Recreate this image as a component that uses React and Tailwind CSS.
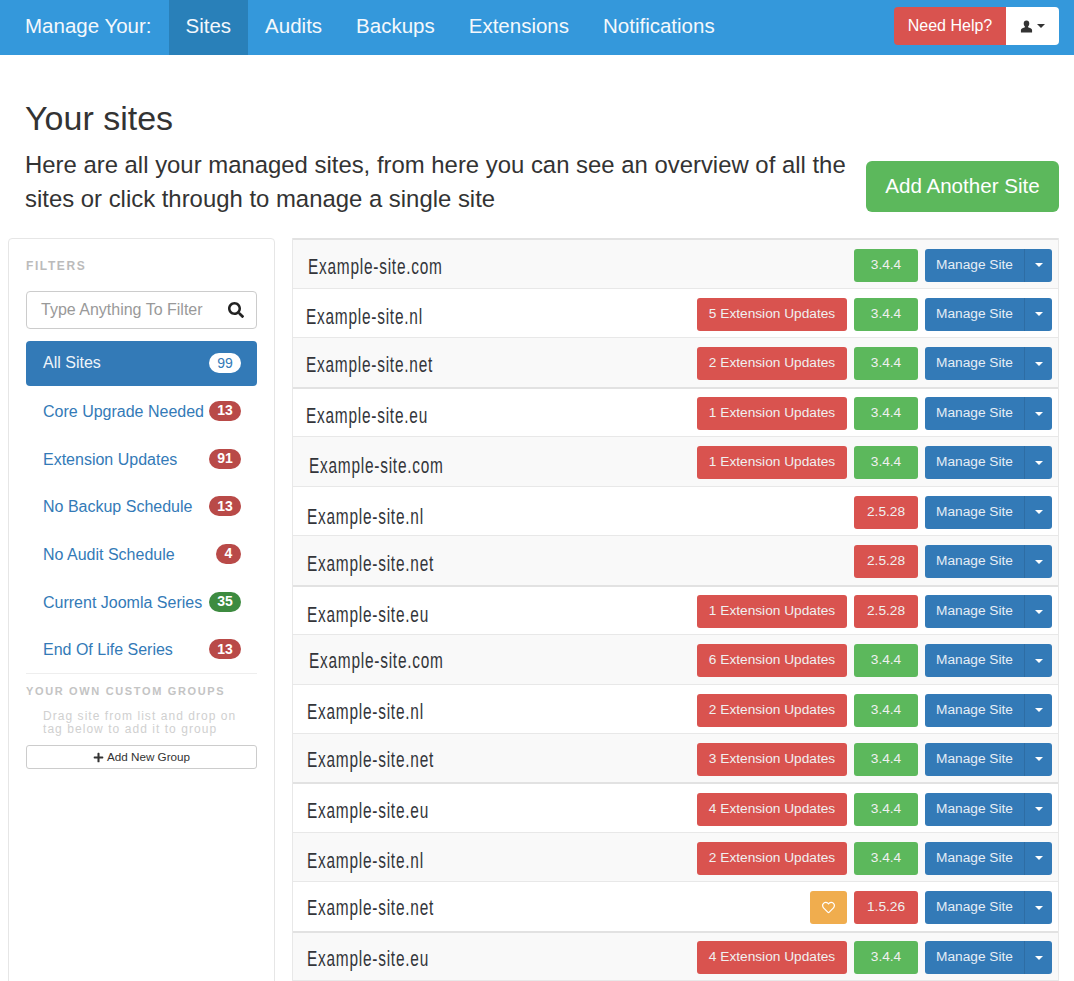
import React from 'react'
import { FaSearch, FaPlus, FaRegHeart } from 'react-icons/fa'

const navLinks = ['Sites', 'Audits', 'Backups', 'Extensions', 'Notifications']

const filters = [
  { label: 'Core Upgrade Needed', count: 13, color: 'bg-[#b94a48]' },
  { label: 'Extension Updates', count: 91, color: 'bg-[#b94a48]' },
  { label: 'No Backup Schedule', count: 13, color: 'bg-[#b94a48]' },
  { label: 'No Audit Schedule', count: 4, color: 'bg-[#b94a48]', small: true },
  { label: 'Current Joomla Series', count: 35, color: 'bg-[#3d8b40]' },
  { label: 'End Of Life Series', count: 13, color: 'bg-[#b94a48]' },
]

// h = row height, pad = name indent, nudge = name drop, thick = heavier top line
const sites = [
  { name: 'Example-site.com', ver: '3.4.4', h: 'h-[50px]', pad: 'pl-[15px]', nudge: 'mt-[6px]', thick: true },
  { name: 'Example-site.nl', ext: 5, ver: '3.4.4', h: 'h-[49px]', pad: 'pl-[13px]', nudge: 'mt-[8px]' },
  { name: 'Example-site.net', ext: 2, ver: '3.4.4', h: 'h-[50px]', pad: 'pl-[13px]', nudge: 'mt-[5px]' },
  { name: 'Example-site.eu', ext: 1, ver: '3.4.4', h: 'h-[49px]', pad: 'pl-[13px]', nudge: 'mt-[6px]', thick: true },
  { name: 'Example-site.com', ext: 1, ver: '3.4.4', h: 'h-[50px]', pad: 'pl-[16px]', nudge: 'mt-[8px]' },
  { name: 'Example-site.nl', ver: '2.5.28', old: true, h: 'h-[49px]', pad: 'pl-[14px]', nudge: 'mt-[12px]' },
  { name: 'Example-site.net', ver: '2.5.28', old: true, h: 'h-[50px]', pad: 'pl-[14px]', nudge: 'mt-[6px]' },
  { name: 'Example-site.eu', ext: 1, ver: '2.5.28', old: true, h: 'h-[49px]', pad: 'pl-[14px]', nudge: 'mt-[8px]', thick: true },
  { name: 'Example-site.com', ext: 6, ver: '3.4.4', h: 'h-[50px]', pad: 'pl-[16px]', nudge: 'mt-[3px]' },
  { name: 'Example-site.nl', ext: 2, ver: '3.4.4', h: 'h-[49px]', pad: 'pl-[14px]', nudge: 'mt-[6px]' },
  { name: 'Example-site.net', ext: 3, ver: '3.4.4', h: 'h-[49px]', pad: 'pl-[14px]', nudge: 'mt-[3px]' },
  { name: 'Example-site.eu', ext: 4, ver: '3.4.4', h: 'h-[50px]', pad: 'pl-[14px]', nudge: 'mt-[5px]', thick: true },
  { name: 'Example-site.nl', ext: 2, ver: '3.4.4', h: 'h-[49px]', pad: 'pl-[14px]', nudge: 'mt-[8px]' },
  { name: 'Example-site.net', heart: true, ver: '1.5.26', old: true, h: 'h-[50px]', pad: 'pl-[14px]', nudge: 'mt-[3px]' },
  { name: 'Example-site.eu', ext: 4, ver: '3.4.4', h: 'h-[49px]', pad: 'pl-[14px]', nudge: 'mt-[4px]', thick: true },
]

const Caret = ({ className }) => (
  <span className={`inline-block w-0 h-0 border-x-[4px] border-x-transparent border-t-[4px] ${className}`} />
)

const UserIcon = () => (
  <svg viewBox="0 0 14 14" className="w-[13px] h-[13px]" fill="currentColor">
    <path d="M7 .5c-2 0-3 1.4-3 3.2 0 1.3.6 2.6 1.3 3.2v1c-1.5.7-4.3 1.4-4.3 3v2.6h12v-2.6c0-1.6-2.8-2.3-4.3-3v-1c.7-.6 1.3-1.9 1.3-3.2C10 1.900 9 .5 7 .5z" />
  </svg>
)

const SiteRow = ({ site, index }) => (
  <div className={`flex items-center pr-[6px] border-t ${site.thick ? 'border-t-2 border-t-[#e2e2e2]' : 'border-t-[#e8e8e8]'} ${site.h} ${site.pad} ${index % 2 === 0 ? 'bg-[#f9f9f9]' : 'bg-white'}`}>
    {/* no condensed font here, so squeeze the name to the reference's width */}
    <span className={`origin-left scale-x-[.7] whitespace-nowrap text-[22px] leading-[26px] tracking-[1.1px] text-[#33353a] ${site.nudge}`}>{site.name}</span>
    <div className="ml-auto mt-[2px] flex gap-[7px] text-[13.7px] text-[#f0f0f0]">
      {site.ext && (
        <span className="flex items-center justify-center w-[150px] h-[33px] rounded-[3px] bg-[#d9534f]">{site.ext} Extension Updates</span>
      )}
      {site.heart && (
        <span className="flex items-center justify-center w-[37px] h-[33px] rounded-[3px] bg-[#f0ad4e]">
          <FaRegHeart className="w-[13px] h-[13px] text-white" />
        </span>
      )}
      <span className={`flex items-center justify-center w-[64px] h-[33px] rounded-[3px] ${site.old ? 'bg-[#d9534f]' : 'bg-[#5cb85c]'}`}>{site.ver}</span>
      <div className="flex h-[33px] w-[127px] rounded-[3px] bg-[#337ab7] text-[#e6eef6]">
        <span className="flex items-center justify-center w-[99px]">Manage Site</span>
        <span className="flex items-center justify-center w-[28px] border-l border-[#2e6da4]">
          <Caret className="border-t-white" />
        </span>
      </div>
    </div>
  </div>
)

const App = () => {
  return (
    <div className="h-[981px] overflow-hidden bg-white font-['Liberation_Sans',Arial,sans-serif] text-[#333]">
      <nav className="flex items-center h-[55px] pl-[25px] pr-[15px] bg-[#3498db] text-[20.5px] text-[#f4f8fc]">
        <span className="mr-[17px] pb-[3px]">Manage Your:</span>
        <div className="flex">
          {navLinks.map((link, i) => (
            <a key={link} className={`flex items-center h-[55px] px-[17px] pb-[3px] ${i === 0 ? 'bg-[#2980b9]' : ''}`}>{link}</a>
          ))}
        </div>
        <div className="ml-auto mb-[3px] flex h-[38px] text-[16px]">
          <span className="flex items-center justify-center w-[112px] rounded-l-[4px] bg-[#d9534f] text-white">Need Help?</span>
          <span className="flex items-center justify-center gap-[4px] w-[53px] rounded-r-[4px] bg-white text-[#333]">
            <UserIcon />
            <Caret className="border-t-[#333]" />
          </span>
        </div>
      </nav>

      <header className="flex pl-[25px] pr-[15px] pt-[43px] h-[183px]">
        <div className="w-[830px]">
          <h1 className="text-[34px] leading-[40px] mb-[10px]">Your sites</h1>
          <p className="text-[23.9px] leading-[34px]">Here are all your managed sites, from here you can see an overview of all the sites or click through to manage a single site</p>
        </div>
        <a className="ml-auto mt-[63px] flex items-center justify-center w-[193px] h-[51px] rounded-[6px] bg-[#5cb85c] text-[20.6px] text-white">Add Another Site</a>
      </header>

      <main className="flex items-start pl-[8px] pr-[15px]">
        <aside className="w-[267px] h-[760px] shrink-0 px-[17px] rounded-[4px] border border-[#e6e6e6]">
          <div className="pt-[20px] text-[12px] leading-[14px] font-bold tracking-[1.6px] text-[#bbb]">FILTERS</div>
          <div className="flex items-center justify-between h-[38px] mt-[18px] pl-[14px] pr-[12px] rounded-[4px] border border-[#ccc] text-[16px] text-[#999]">
            <span>Type Anything To Filter</span>
            <FaSearch className="w-[16px] h-[16px] text-[#222]" />
          </div>
          <div className="flex items-center justify-between h-[45px] mt-[12px] pl-[17px] pr-[16px] pb-[1px] rounded-[4px] bg-[#337ab7] text-[16px] text-[#eef4fa]">
            <span>All Sites</span>
            <span className="flex items-center justify-center w-[32px] h-[20px] rounded-full bg-white text-[14px] text-[#337ab7]">99</span>
          </div>
          <ul className="mt-[2px]">
            {filters.map((f) => (
              <li key={f.label} className="flex items-center justify-between h-[47.7px] pl-[17px] pr-[16px] text-[16px] text-[#337ab7]">
                <span>{f.label}</span>
                <span className={`flex items-center justify-center ${f.small ? 'w-[25px]' : 'w-[32px]'} h-[20px] -mt-[2px] rounded-full text-[14px] font-bold text-white ${f.color}`}>{f.count}</span>
              </li>
            ))}
          </ul>
          <div className="border-t border-[#eee] mt-[-1px] pt-[11px] text-[11px] leading-[13px] font-bold tracking-[1.65px] text-[#c4c4c4]">YOUR OWN CUSTOM GROUPS</div>
          <p className="mt-[12px] pl-[17px] text-[12px] leading-[12.5px] tracking-[1.05px] text-[#d0d0d0]">Drag site from list and drop on tag below to add it to group</p>
          <div className="flex items-center justify-center gap-[3px] h-[24px] mt-[10px] rounded-[3px] border border-[#ccc] text-[11.7px] text-[#333]">
            <FaPlus className="w-[11px] h-[11px]" />
            <span>Add New Group</span>
          </div>
        </aside>

        <section className="ml-[17px] w-[767px] border-x border-b border-[#e8e8e8]">
          {sites.map((site, i) => (
            <SiteRow key={i} site={site} index={i} />
          ))}
        </section>
      </main>
    </div>
  )
}

export default App
